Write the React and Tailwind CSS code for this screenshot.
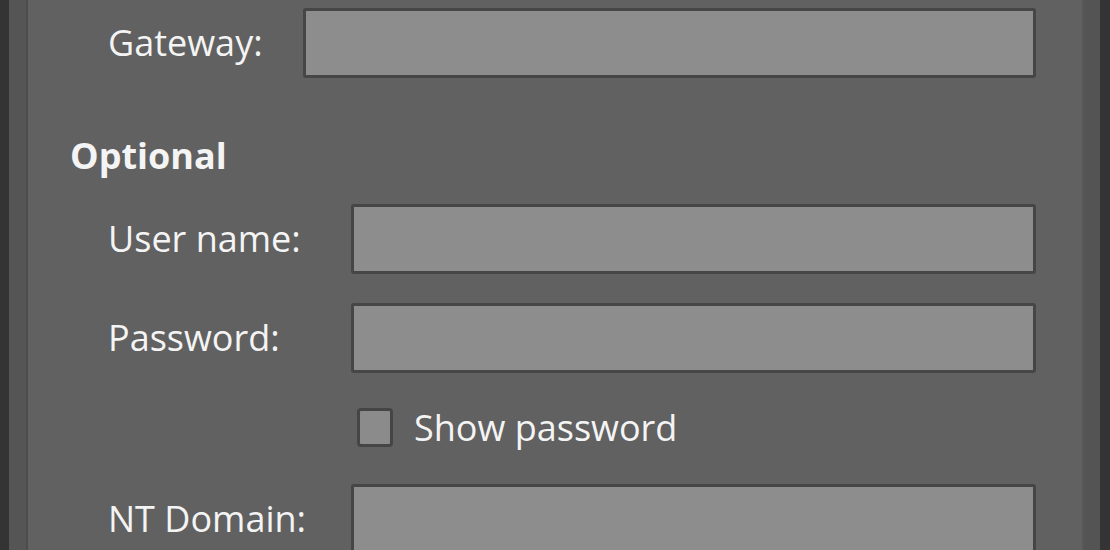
function Field({ label, inputLeft }) {
    return (
        <div className="flex items-center h-[70px]">
            <span className="pl-[80px] shrink-0" style={{ width: inputLeft }}>{label}</span>
            <div className="flex-1 h-full mr-[46px] bg-[#8d8d8d] border-[3px] border-[#464646] rounded-[3px]" />
        </div>
    );
}

export default function App() {
    return (
        <div
            className="flex w-[1110px] h-[550px] overflow-hidden text-[36px] text-[#f4f4f4]"
            style={{ fontFamily: '"Open Sans", "Noto Sans", sans-serif' }}
        >
            <div className="w-[9px] bg-[#343434]" />
            <div className="w-[19px] bg-[#555555] border-r-2 border-[#4c4c4c]" />

            <div className="flex-1 bg-[#616161] pt-[8px]">
                <Field label="Gateway:" inputLeft={275} />

                <div className="pl-[42px] mt-[54px] mb-[24px] h-[48px] leading-[48px] font-bold">Optional</div>

                <Field label="User name:" inputLeft={323} />
                <div className="h-[29px]" />
                <Field label="Password:" inputLeft={323} />

                <div className="flex items-center h-[39px] mt-[35px] mb-[37px] pl-[329px]">
                    <div className="w-[36px] h-[39px] bg-[#8b8b8b] border-[3px] border-[#454545] rounded-[4px]" />
                    <span className="ml-[21px]">Show password</span>
                </div>

                <Field label="NT Domain:" inputLeft={323} />
            </div>

            <div className="w-[18px] bg-[#545454] border-l-2 border-[#585858]" />
            <div className="w-[10px] bg-[#343434]" />
        </div>
    );
}
